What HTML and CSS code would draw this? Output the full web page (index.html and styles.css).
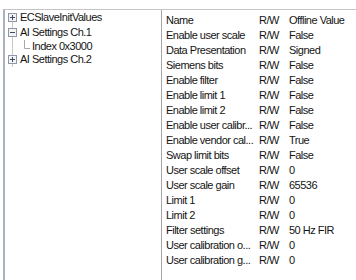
FILE: index.html
```html
<!DOCTYPE html>
<html>
<head>
<meta charset="utf-8">
<link rel="stylesheet" href="styles.css">
</head>
<body>
<div class="frame">
  <div class="tree">
    <div class="tree-list">
      <div class="tree-row">
        <svg class="toggle" width="9" height="9" viewBox="0 0 9 9"><rect x="0.5" y="0.5" width="8" height="8" fill="#f4f4f4" stroke="#8e96a8"/><path d="M2 4.5h5M4.5 2v5" stroke="#3b4a66" stroke-width="1"/></svg>
        <span class="label">ECSlaveInitValues</span>
      </div>
      <div class="tree-row">
        <svg class="toggle" width="9" height="9" viewBox="0 0 9 9"><rect x="0.5" y="0.5" width="8" height="8" fill="#f4f4f4" stroke="#8e96a8"/><path d="M2 4.5h5" stroke="#3b4a66" stroke-width="1"/></svg>
        <span class="label">AI Settings Ch.1</span>
      </div>
      <div class="tree-row child">
        <svg class="elbow" width="6" height="9" viewBox="0 0 6 9"><path d="M0.5 0v8.5H6" stroke="#a8a8a8" fill="none"/></svg>
        <span class="label">Index 0x3000</span>
      </div>
      <div class="tree-row">
        <svg class="toggle" width="9" height="9" viewBox="0 0 9 9"><rect x="0.5" y="0.5" width="8" height="8" fill="#f4f4f4" stroke="#8e96a8"/><path d="M2 4.5h5M4.5 2v5" stroke="#3b4a66" stroke-width="1"/></svg>
        <span class="label">AI Settings Ch.2</span>
      </div>
    </div>
  </div>
  <div class="table">
    <div class="row head"><span>Name</span><span>R/W</span><span>Offline Value</span></div>
    <div class="row"><span>Enable user scale</span><span>R/W</span><span>False</span></div>
    <div class="row"><span>Data Presentation</span><span>R/W</span><span>Signed</span></div>
    <div class="row"><span>Siemens bits</span><span>R/W</span><span>False</span></div>
    <div class="row"><span>Enable filter</span><span>R/W</span><span>False</span></div>
    <div class="row"><span>Enable limit 1</span><span>R/W</span><span>False</span></div>
    <div class="row"><span>Enable limit 2</span><span>R/W</span><span>False</span></div>
    <div class="row"><span>Enable user calibr...</span><span>R/W</span><span>False</span></div>
    <div class="row"><span>Enable vendor cal...</span><span>R/W</span><span>True</span></div>
    <div class="row"><span>Swap limit bits</span><span>R/W</span><span>False</span></div>
    <div class="row"><span>User scale offset</span><span>R/W</span><span>0</span></div>
    <div class="row"><span>User scale gain</span><span>R/W</span><span>65536</span></div>
    <div class="row"><span>Limit 1</span><span>R/W</span><span>0</span></div>
    <div class="row"><span>Limit 2</span><span>R/W</span><span>0</span></div>
    <div class="row"><span>Filter settings</span><span>R/W</span><span>50 Hz FIR</span></div>
    <div class="row"><span>User calibration o...</span><span>R/W</span><span>0</span></div>
    <div class="row"><span>User calibration g...</span><span>R/W</span><span>0</span></div>
  </div>
</div>
</body>
</html>
```

FILE: styles.css
```css
html, body {
  margin: 0;
  padding: 0;
  background: #ffffff;
}

body {
  font-family: "Liberation Sans", Arial, sans-serif;
  font-size: 11px;
  letter-spacing: -0.5px;
  color: #141414;
  overflow: hidden;
}

.frame {
  margin: 9px 0 0 3px;
  height: 271px;
  border-top: 1px solid #c4c4c4;
  display: grid;
  grid-template-columns: 159px 1fr;
  box-sizing: border-box;
}

.tree {
  border-left: 2px solid #aab1c2;
  border-right: 1px solid #a6a6a6;
  box-sizing: border-box;
}

.tree-list {
  position: relative;
}

.tree-list::before {
  content: "";
  position: absolute;
  left: 7px;
  top: 11px;
  height: 46px;
  border-left: 1px solid #c8c8c8;
}

.tree-row {
  position: relative;
  display: flex;
  align-items: center;
  height: 15px;
  line-height: 15px;
  padding-left: 3px;
  white-space: nowrap;
}

.tree-row.child {
  height: 12px;
  padding-left: 19px;
}

.toggle {
  flex: none;
  margin-right: 3px;
  background: #fff;
  position: relative;
  z-index: 1;
}

.elbow {
  flex: none;
  margin-right: 2px;
  margin-top: -4px;
}

.table {
  padding-top: 3px;
}

.row {
  display: grid;
  grid-template-columns: 93px 30px 1fr;
  height: 15px;
  line-height: 15px;
  white-space: nowrap;
}

.row span {
  padding-left: 4px;
  overflow: hidden;
}
```
